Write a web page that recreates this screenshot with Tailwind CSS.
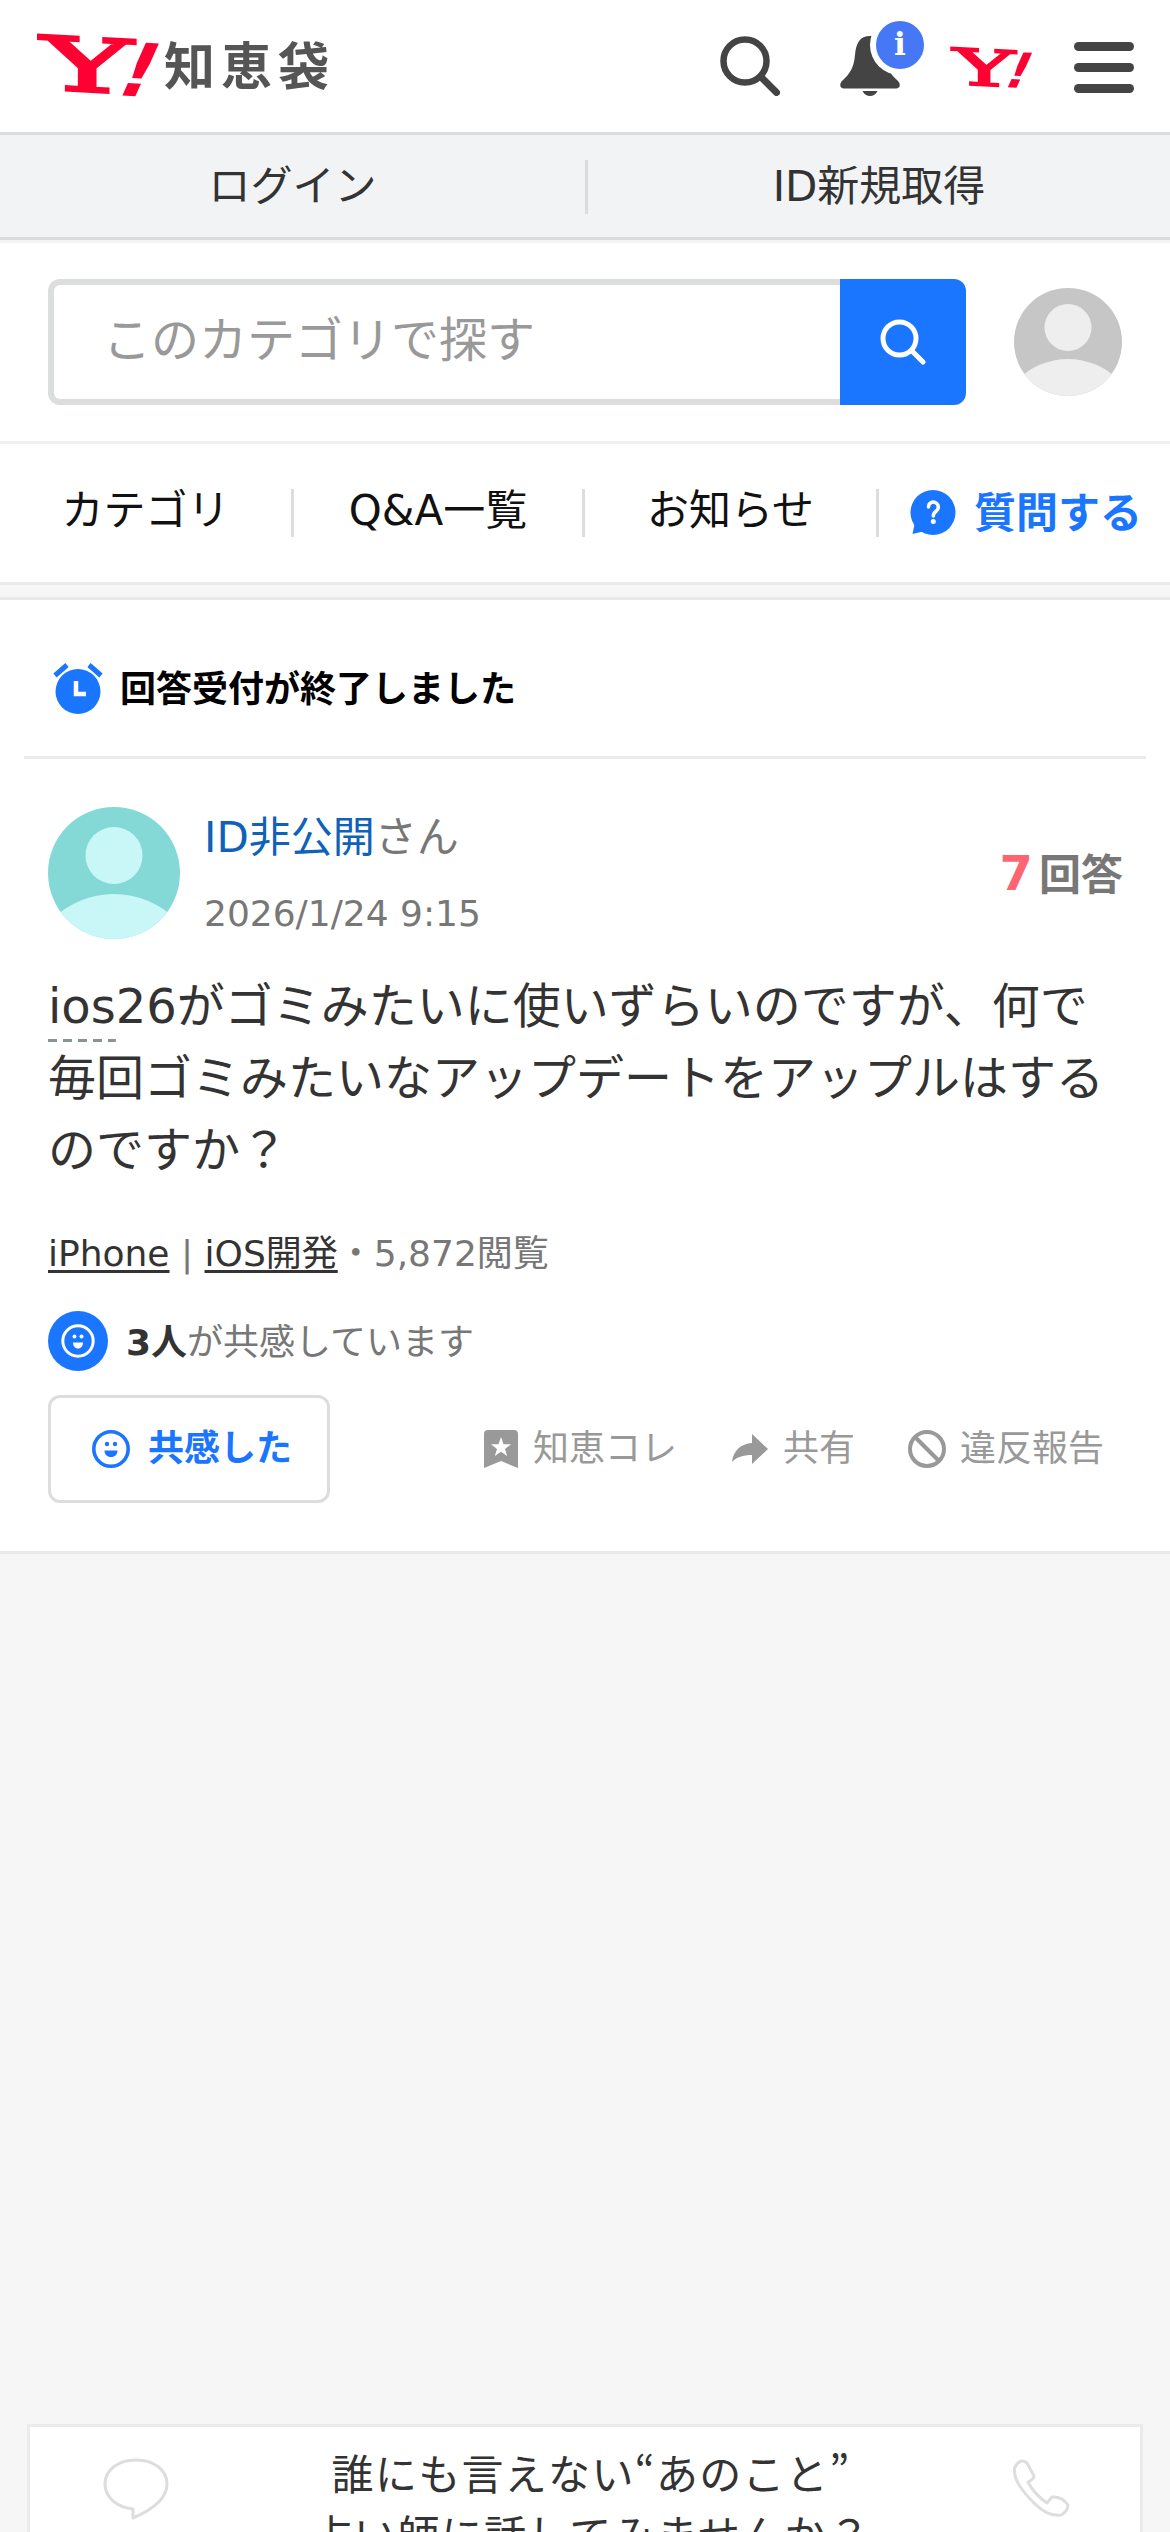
<!DOCTYPE html>
<html lang="ja">
<head>
<meta charset="utf-8">
<title>Yahoo!知恵袋</title>
<script src="https://cdn.jsdelivr.net/npm/@tailwindcss/browser@4"></script>
</head>
<body class="bg-[#f6f6f6] font-['DejaVu_Sans','Noto_Sans_CJK_JP',sans-serif] text-[#333]">
<div class="flex h-[2532px] w-[1170px] flex-col overflow-hidden">

  <header class="flex h-[132px] shrink-0 items-center bg-white pr-9 pl-9">
    <a class="flex items-center">
      <svg class="h-[96px] w-[126px] overflow-visible" viewBox="0 -12 126 96" fill="#ff0033">
        <text font-family="DejaVu Serif" font-size="74" stroke="#ff0033" stroke-width="2.6" textLength="92" lengthAdjust="spacingAndGlyphs" transform="translate(5 59) skewY(3)">Y</text>
        <text font-family="DejaVu Sans" font-weight="700" font-size="74" transform="translate(76 65) rotate(3) skewX(-21)">!</text>
      </svg>
      <span class="mt-1 ml-[2px] text-[51px] leading-[76px] font-bold tracking-[6px] text-[#555]">知恵袋</span>
    </a>
    <div class="ml-auto flex items-center">
      <svg class="h-[60px] w-[60px]" viewBox="0 0 60 60" fill="none" stroke="#444" stroke-linecap="round">
        <circle cx="25" cy="25" r="21.500" stroke-width="6.500"/><path d="M41 41L56.500 56.500" stroke-width="7"/>
      </svg>
      <svg class="ml-[60px] h-[90px] w-[84px]" viewBox="0 0 84 90">
        <path d="M30 15C20 15 16 22 15 34C14 46 10 53 2 60C-1 63 0 67.500 4 67.500H56C60 67.500 61 63 58 60C50 53 46 46 45 34C44 22 40 15 30 15Z" fill="#444"/>
        <path d="M22.500 70H37.500C36 73.500 33 75 30 75S24 73.500 22.500 70Z" fill="#444"/>
        <circle cx="60" cy="24" r="30" fill="#fff"/><circle cx="60" cy="24" r="24" fill="#4678f5"/>
        <text x="60" y="34" text-anchor="middle" font-family="DejaVu Serif" font-weight="700" font-size="31" fill="#fff">i</text>
      </svg>
      <svg class="mt-[2px] ml-[24px] h-[66px] w-[84px] overflow-visible" viewBox="0 -10 84 66" fill="#ff0033">
        <text font-family="DejaVu Serif" font-size="50" stroke="#ff0033" stroke-width="1.8" textLength="62" lengthAdjust="spacingAndGlyphs" transform="translate(5 40) skewY(3)">Y</text>
        <text font-family="DejaVu Sans" font-weight="700" font-size="49" transform="translate(53 43) rotate(3) skewX(-21)">!</text>
      </svg>
      <div class="mt-[3px] ml-[42px] flex w-[60px] flex-col gap-3">
        <i class="h-[9px] rounded-full bg-[#444]"></i><i class="h-[9px] rounded-full bg-[#444]"></i><i class="h-[9px] rounded-full bg-[#444]"></i>
      </div>
    </div>
  </header>

  <div class="flex h-[108px] shrink-0 items-center border-y-[3px] border-[#dadcdd] bg-[#f1f3f5] pt-[2px] text-[42px] leading-[60px]">
    <a class="w-[585px] text-center">ログイン</a>
    <i class="h-[54px] w-[3px] bg-[#dadcdd]"></i>
    <a class="flex-1 text-center">ID新規取得</a>
  </div>

  <div class="flex h-[204px] shrink-0 items-center border-t-[3px] border-b-[3px] border-t-[#f4f4f4] border-b-[#f1f1f1] bg-white px-12">
    <div class="flex h-[126px] w-[792px] items-center rounded-l-[12px] border-y-[6px] border-l-[6px] border-[#dcdddd] pl-[49px] text-[48px] leading-[72px] text-[#999]"><span class="-mt-1">このカテゴリで探す</span></div>
    <button class="flex h-[126px] w-[126px] items-center justify-center rounded-r-[12px] bg-[#1a75ff]">
      <svg class="h-[46px] w-[46px]" viewBox="0 0 46 46" fill="none" stroke="#fff" stroke-width="5" stroke-linecap="round"><circle cx="19.500" cy="19.500" r="16.500"/><path d="M32 32L43 43"/></svg>
    </button>
    <svg class="ml-auto h-[108px] w-[108px] rounded-full" viewBox="0 0 108 108"><rect width="108" height="108" fill="#c6c6c6"/><circle cx="54" cy="39.500" r="23.500" fill="#eee"/><circle cx="54" cy="143" r="72" fill="#eee"/></svg>
  </div>

  <nav class="flex h-[141px] shrink-0 items-center border-b-[3px] border-[#ebebeb] bg-white text-[42px] leading-[60px] text-[#111]">
    <a class="-mt-1 w-[291px] text-center">カテゴリ</a>
    <i class="h-12 w-[3px] bg-[#dcdddd]"></i>
    <a class="-mt-1 w-[288px] text-center">Q&amp;A一覧</a>
    <i class="h-12 w-[3px] bg-[#dcdddd]"></i>
    <a class="-mt-1 w-[291px] text-center">お知らせ</a>
    <i class="h-12 w-[3px] bg-[#dcdddd]"></i>
    <a class="flex flex-1 items-center pl-[31px] font-bold text-[#1a75ff]">
      <svg class="mr-[18px] h-[46px] w-[46px]" viewBox="0 0 46 46"><circle cx="23" cy="22.500" r="22.500" fill="#1a75ff"/><path d="M5 32L2.500 44L15 41Z" fill="#1a75ff"/><path d="M18.500 17a4.900 4.900 0 1 1 7.800 4c-2 1.500-3 2.500-3 5" fill="none" stroke="#fff" stroke-width="3.500" stroke-linecap="round"/><circle cx="23.300" cy="31.500" r="2.500" fill="#fff"/></svg>
      <span class="mt-[2px]">質問する</span>
    </a>
  </nav>
  <div class="h-[15px] shrink-0 border-b-[3px] border-[#e9e9e9]"></div>

  <main class="flex h-[954px] shrink-0 flex-col border-b-[3px] border-[#e9e9e9] bg-white">
    <div class="mx-6 flex h-[159px] shrink-0 items-center border-b-[3px] border-[#ebebeb] pt-[21px] pl-[29px] text-[36px] leading-[54px] font-bold text-black">
      <svg class="h-[51px] w-[50px]" viewBox="0 0 50 51" fill="#1a75ff"><circle cx="25" cy="28.500" r="22.500"/><path d="M2 12.500L14 2M48 12.500L36 2" stroke="#1a75ff" stroke-width="5"/><path d="M23 18V31H33" fill="none" stroke="#fff" stroke-width="4.500"/></svg>
      <span class="mt-[2px] ml-[17px]">回答受付が終了しました</span>
    </div>

    <div class="mt-12 flex h-[132px] shrink-0 px-12">
      <svg class="h-[132px] w-[132px] rounded-full" viewBox="0 0 132 132"><rect width="132" height="132" fill="#84d9d7"/><circle cx="66" cy="48.500" r="28.500" fill="#c9f7f7"/><circle cx="66" cy="175" r="88" fill="#c9f7f7"/></svg>
      <div class="-mt-px ml-6 flex flex-col text-[#777]">
        <p class="text-[42px] leading-[63px]"><a class="text-[#0f62b8]">ID非公開</a>さん</p>
        <p class="mt-[18px] text-[36px] leading-[54px]">2026/1/24 9:15</p>
      </div>
      <p class="mt-[3px] -mr-px ml-auto self-center text-[42px] leading-[60px] font-bold text-[#777]"><span class="mr-[6px] text-[48px] text-[#ff6473]">7</span>回答</p>
    </div>

    <h1 class="mt-[31px] px-12 text-[48px] leading-[72px]"><span class="inline-block h-[72px] bg-[repeating-linear-gradient(90deg,#869494_0_9px,transparent_9px_15px)] bg-[length:100%_3px] bg-bottom bg-no-repeat align-top">ios</span>26がゴミみたいに使いずらいのですが、何で<br>毎回ゴミみたいなアップデートをアップルはする<br>のですか？</h1>

    <p class="mt-[41px] px-12 text-[36px] leading-[54px] text-[#777]"><a class="text-[#333] underline decoration-[3px] underline-offset-[4px]">iPhone</a> | <a class="text-[#333] underline decoration-[3px] underline-offset-[4px]">iOS開発</a>・5,872閲覧</p>

    <div class="mt-[30px] flex h-[60px] items-center px-12 text-[36px] leading-[54px] text-[#777]">
      <svg class="h-[60px] w-[60px]" viewBox="0 0 60 60"><circle cx="30" cy="30" r="30" fill="#1a75ff"/><circle cx="30" cy="30" r="15.200" fill="none" stroke="#fff" stroke-width="3"/><circle cx="26.500" cy="25.500" r="2" fill="#fff"/><circle cx="33.500" cy="25.500" r="2" fill="#fff"/><path d="M25 31.500H35C35 35 33 37.500 30 37.500S25 35 25 31.500Z" fill="#fff"/></svg>
      <p class="mt-[3px] ml-[18px]"><b class="text-[#333]">3人</b>が共感しています</p>
    </div>

    <div class="mt-6 flex h-[108px] items-center px-12 text-[36px] leading-[54px] text-[#999]">
      <button class="flex h-[108px] w-[282px] items-center rounded-[12px] border-[3px] border-[#dcdddd] pl-[41px] font-bold text-[#1a75ff]">
        <svg class="mr-[18px] h-[38px] w-[38px]" viewBox="0 0 38 38" fill="#1a75ff"><circle cx="19" cy="19" r="17.200" fill="none" stroke="#1a75ff" stroke-width="3.600"/><circle cx="15" cy="14" r="2.200"/><circle cx="23" cy="14" r="2.200"/><path d="M12.500 20.500H25.500C25.500 24.500 23 27 19 27S12.500 24.500 12.500 20.500Z"/></svg>
        <span>共感した</span>
      </button>
      <svg class="ml-[154px] h-[38px] w-[34px]" viewBox="0 0 34 38"><path d="M0 38V4Q0 0 4 0H30Q34 0 34 4V38L17 31Z" fill="#999"/><path d="M17 7L19.500 14.200L27 14.300L21 19L23.200 26L17 21.800L10.800 26L13 19L7 14.300L14.500 14.200Z" fill="#fff"/></svg>
      <span class="ml-[15px]">知恵コレ</span>
      <svg class="ml-[55px] h-[30px] w-[36px]" viewBox="0 0 36 30"><path d="M20 0L36 15L20 30V21C11 21 5 23 0 28C1 17 9 9.500 20 9Z" fill="#999"/></svg>
      <span class="ml-[15px]">共有</span>
      <svg class="ml-[53px] h-[38px] w-[38px]" viewBox="0 0 38 38" fill="none" stroke="#999" stroke-width="4"><circle cx="19" cy="19" r="17"/><path d="M7 7L31 31"/></svg>
      <span class="ml-[14px]">違反報告</span>
    </div>
  </main>

  <section class="mx-[27px] mt-[870px] flex h-[216px] shrink-0 justify-between border-[3px] border-[#ebebeb] bg-white pr-[70px] pl-[72px] pt-[14px]">
    <svg class="mt-[15px] h-[64px] w-[68px]" viewBox="0 0 68 64" fill="none" stroke="#ddd" stroke-width="3" stroke-linejoin="round"><path d="M31 53C14 51 3 41 3 28C3 14 16 4 34 4S65 14 65 28C65 42 52 53 31 62Z"/></svg>
    <p class="text-center text-[42px] leading-[61px] tracking-[1.3px] whitespace-nowrap font-['Noto_Sans_CJK_JP',sans-serif]">誰にも言えない“あのこと”<br>占い師に話してみませんか？</p>
    <svg class="mt-[17px] h-[60px] w-[58px]" viewBox="0 0 58 60" fill="none" stroke="#ddd" stroke-width="3" stroke-linejoin="round"><path d="M3 9C6 3 11 1 15 5L22 18Q22 21 16 24Q22 36 35 45L40 39Q50 38 56 47Q56 53 49 57Q36 59 22 45C8 31 0 19 3 9Z"/></svg>
  </section>
</div>
</body>
</html>
